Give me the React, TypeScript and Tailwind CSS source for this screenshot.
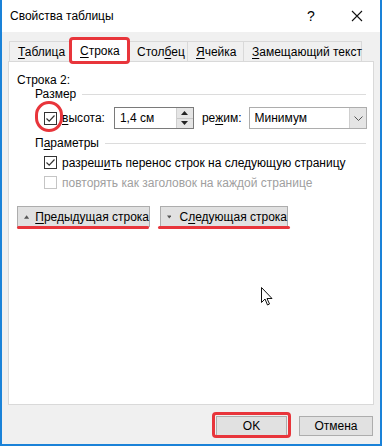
import React from 'react';

const FONT = { fontFamily: '"Liberation Sans", Arial, sans-serif' };

const U: React.FC<{ children: React.ReactNode }> = ({ children }) => (
  <span className="underline underline-offset-2">{children}</span>
);

const Checkbox: React.FC<{ checked?: boolean; disabled?: boolean }> = ({ checked, disabled }) => (
  <div
    className={`w-[13px] h-[13px] border bg-white flex items-center justify-center shrink-0 ${
      disabled ? 'border-[#c5c5c5]' : 'border-[#333333]'
    }`}
  >
    {checked && (
      <svg width="11" height="11" viewBox="0 0 11 11">
        <path d="M1.5 5.5 L4.2 8.2 L9.5 2.5" fill="none" stroke="#333" strokeWidth="1.2" />
      </svg>
    )}
  </div>
);

const GroupLabel: React.FC<{ children: React.ReactNode }> = ({ children }) => (
  <div className="flex items-center gap-[6px] pl-[26px] pr-[7px] h-[12px]">
    <span className="leading-none">{children}</span>
    <div className="flex-1 h-px bg-[#dcdcdc]" />
  </div>
);

const tabs = [
  { w: 61, label: <><U>Т</U>аблица</> },
  { w: 59, label: <><U>С</U>трока</>, active: true },
  { w: 60, label: <>Стол<U>б</U>ец</> },
  { w: 57, label: <><U>Я</U>чейка</> },
  { w: 119, label: <><U>З</U>амещающий текст</> },
];

const App: React.FC = () => {
  return (
    <div
      className="relative w-[382px] h-[446px] bg-[#f0f0f0] border-l-2 border-r-2 border-b-2 border-[#1a82d8] text-[12px] text-black flex flex-col overflow-hidden whitespace-nowrap"
      style={FONT}
    >
      {/* title bar */}
      <div className="h-[32px] bg-white flex items-center pl-[8px] shrink-0">
        <span className="text-[12px]">Свойства таблицы</span>
        <div className="flex-1" />
        <span className="w-[46px] text-center text-[14px]">?</span>
        <div className="w-[46px] flex justify-center">
          <svg width="12" height="12" viewBox="0 0 12 12">
            <path d="M1 1 L11 11 M11 1 L1 11" stroke="#111" strokeWidth="1.1" />
          </svg>
        </div>
      </div>

      {/* tabs */}
      <div className="flex pl-[7px] mt-[9px] h-[20px] items-end relative z-10 shrink-0">
        {tabs.map((t, i) => (
          <div
            key={i}
            style={{ width: t.w }}
            className={
              t.active
                ? 'h-[23px] bg-white border border-b-0 border-[#d9d9d9] flex items-center pl-[9px] -mb-px relative'
                : 'h-[20px] bg-[#f0f0f0] border border-b-0 border-[#d9d9d9] flex items-center pl-[8px] -ml-px first:ml-0'
            }
          >
            <span className="leading-none">{t.label}</span>
            {t.active && (
              <div className="absolute -left-[2px] -right-[2px] -top-[3px] -bottom-[2px] border-[3px] border-[#e8353b] rounded-[4px]" />
            )}
          </div>
        ))}
      </div>

      {/* panel */}
      <div className="mx-[6px] h-[344px] bg-white border border-[#d9d9d9] flex flex-col relative shrink-0">
        <div className="pl-[8px] pt-[12px] leading-none">Строка 2:</div>

        <div className="mt-[2px]">
          <GroupLabel>Размер</GroupLabel>
        </div>

        <div className="flex items-center mt-[7px] pl-[35px] h-[22px]">
          <Checkbox checked />
          <span className="ml-[5px]"><U>в</U>ысота:</span>
          <div className="ml-[9px] w-[80px] h-[22px] border border-[#7a7a7a] flex">
            <span className="flex-1 pl-[5px] leading-[20px]">1,4 см</span>
            <div className="w-[17px] flex flex-col border-l border-[#cfcfcf]">
              <div className="flex-1 bg-[#e5e5e5] flex items-center justify-center border-b border-[#c8c8c8]">
                <svg width="7" height="4" viewBox="0 0 7 4"><path d="M0 4 L3.5 0 L7 4Z" fill="#222" /></svg>
              </div>
              <div className="flex-1 bg-[#e5e5e5] flex items-center justify-center">
                <svg width="7" height="4" viewBox="0 0 7 4"><path d="M0 0 L3.5 4 L7 0Z" fill="#222" /></svg>
              </div>
            </div>
          </div>
          <span className="ml-[8px]">ре<U>ж</U>им:</span>
          <div className="ml-[8px] w-[118px] h-[22px] border border-[#adadad] flex">
            <span className="flex-1 pl-[4px] leading-[20px]">Минимум</span>
            <div className="w-[17px] bg-[#e5e5e5] border-l border-[#cfcfcf] flex items-center justify-center">
              <svg width="9" height="5" viewBox="0 0 9 5">
                <path d="M0.5 0.5 L4.5 4.5 L8.5 0.5" fill="none" stroke="#555" strokeWidth="1" />
              </svg>
            </div>
          </div>
        </div>

        <div className="mt-[8px]">
          <GroupLabel>
            П<U>а</U>раметры
          </GroupLabel>
        </div>

        <div className="flex items-center mt-[7px] pl-[35px]">
          <Checkbox checked />
          <span className="ml-[5px] leading-none">разреш<U>и</U>ть перенос строк на следующую страницу</span>
        </div>
        <div className="flex items-center mt-[7px] pl-[35px] text-[#a0a0a0]">
          <Checkbox disabled />
          <span className="ml-[5px] leading-none">повторять как заголовок на каждой странице</span>
        </div>

        <div className="flex mt-[17px] pl-[8px] gap-[10px]">
          <div className="flex flex-col">
            <div className="w-[133px] h-[21px] bg-[#e1e1e1] border border-[#adadad] flex items-center pl-[6px]">
              <svg width="9" height="6" viewBox="0 0 9 6"><path d="M0 6 L4.5 0 L9 6Z" fill="#555" /></svg>
              <span className="ml-[6px] leading-none"><U>П</U>редыдущая строка</span>
            </div>
            <div className="h-[3px] bg-[#e8353b] rounded-full -mt-px w-[132px]" />
          </div>
          <div className="flex flex-col">
            <div className="w-[128px] h-[21px] bg-[#e1e1e1] border border-[#adadad] flex items-center pl-[6px]">
              <svg width="9" height="6" viewBox="0 0 9 6"><path d="M0 0 L4.5 6 L9 0Z" fill="#555" /></svg>
              <span className="ml-[8px] leading-none">С<U>л</U>едующая строка</span>
            </div>
            <div className="h-[3px] bg-[#e8353b] rounded-full -mt-px w-[132px] -ml-[2px]" />
          </div>
        </div>

        {/* annotation circle around first checkbox */}
        <div className="absolute left-[26px] top-[39px] w-[28px] h-[31px] border-[3px] border-[#e8353b] rounded-full" />

        {/* mouse cursor */}
        <svg className="absolute left-[252px] top-[225px]" width="13" height="20" viewBox="0 0 13 20">
          <path
            d="M0.5 0.5 L0.5 15.5 L4 12 L6.5 18 L8.5 17 L6 11.5 L11 11.5 Z"
            fill="#fff"
            stroke="#111"
            strokeWidth="1"
            strokeLinejoin="round"
          />
        </svg>
      </div>

      {/* bottom buttons */}
      <div className="flex justify-end gap-[12px] pr-[7px] mt-[11px]">
        <div className="relative">
          <div className="w-[71px] h-[20px] bg-[#e1e1e1] border border-[#adadad] flex items-center justify-center">
            OK
          </div>
          <div className="absolute -left-[4px] -right-[4px] -top-[4px] -bottom-[2px] border-[3px] border-[#e8353b] rounded-[4px]" />
        </div>
        <div className="w-[74px] h-[20px] bg-[#e1e1e1] border border-[#adadad] flex items-center justify-center">
          Отмена
        </div>
      </div>
    </div>
  );
};

export default App;
